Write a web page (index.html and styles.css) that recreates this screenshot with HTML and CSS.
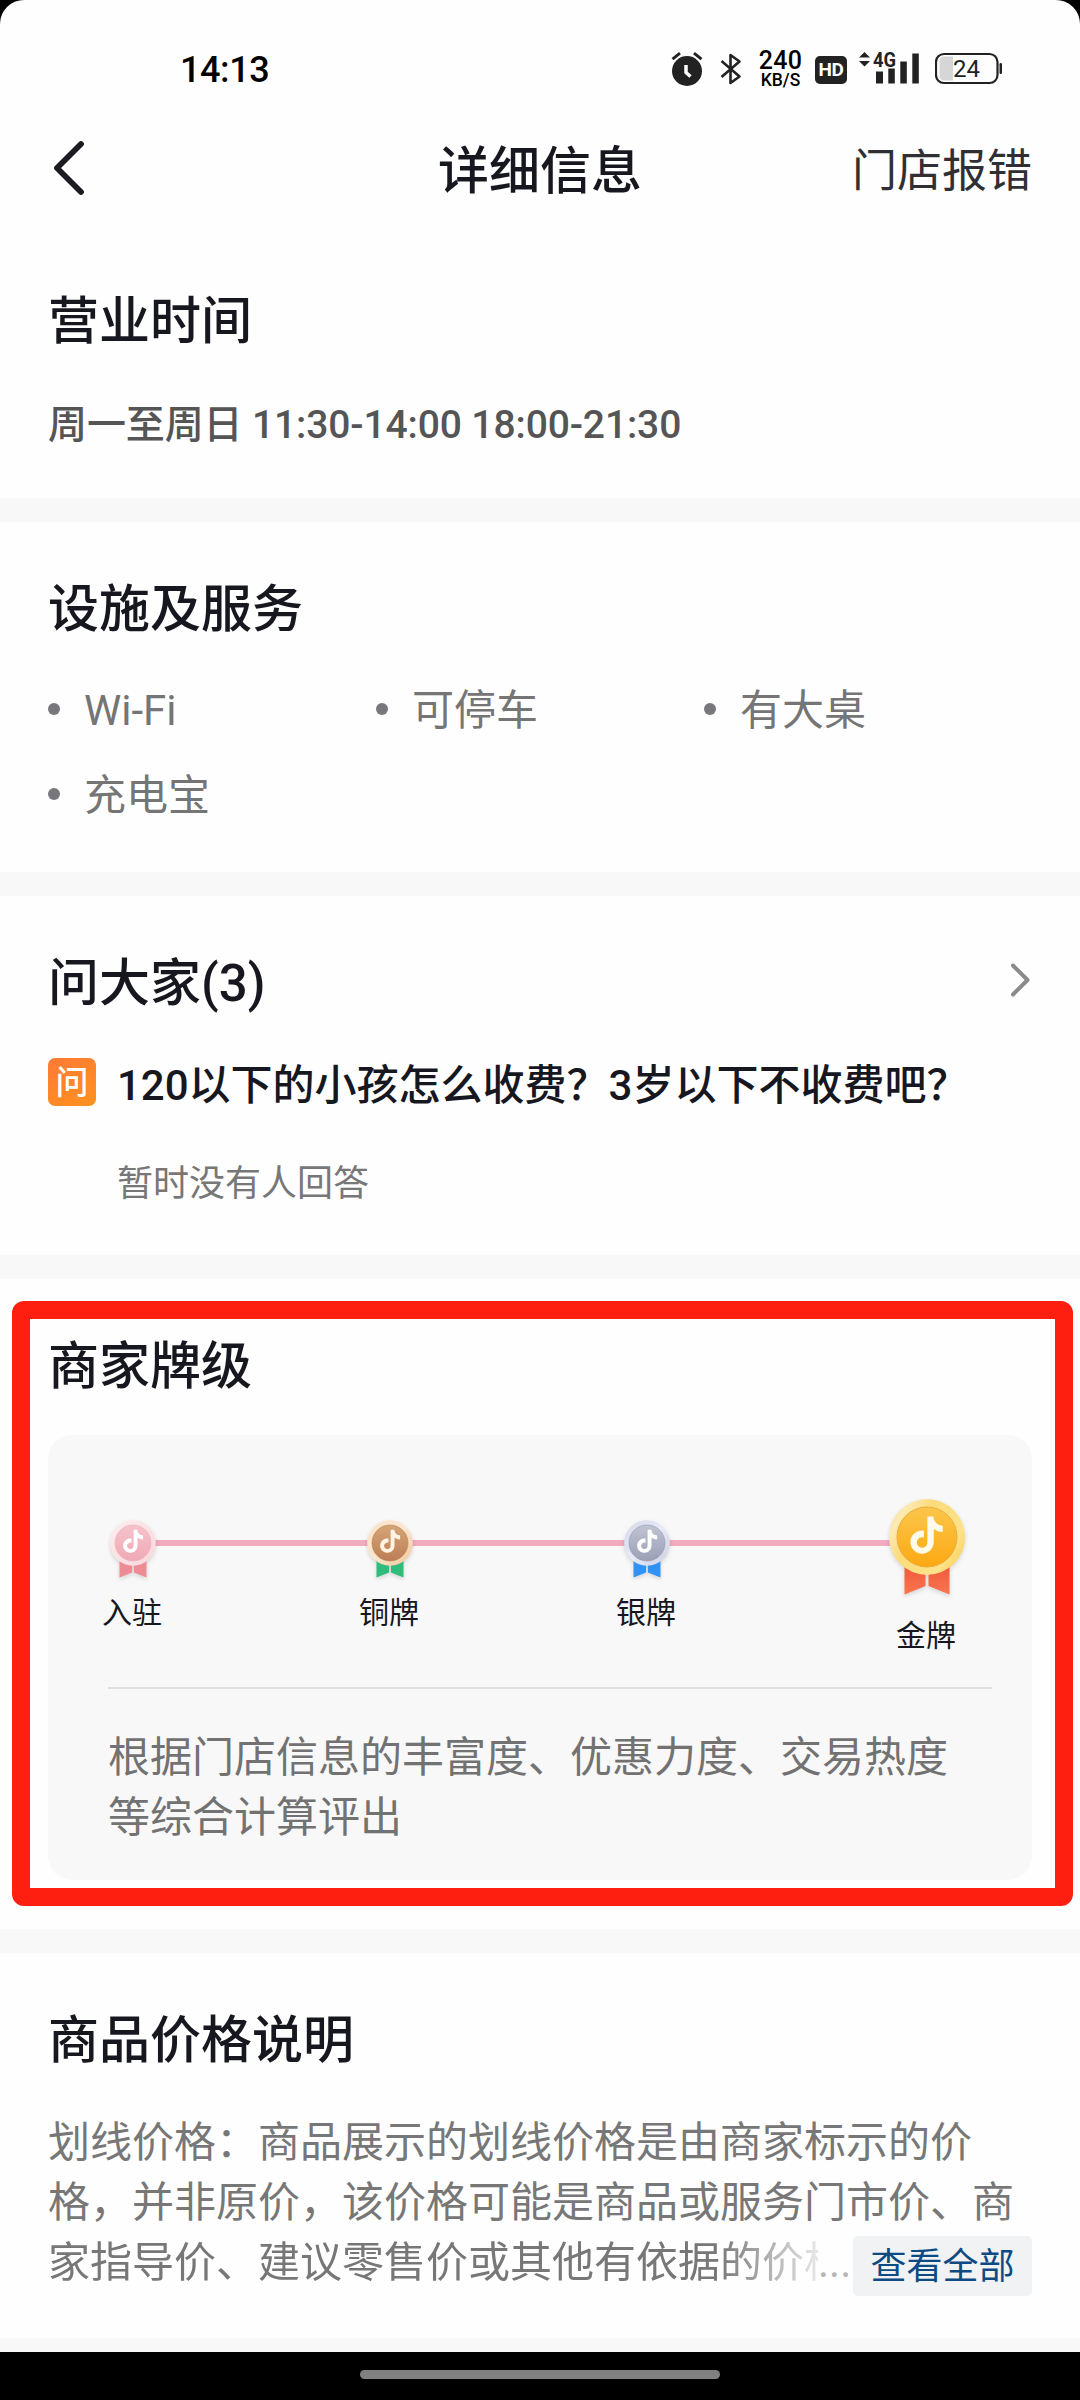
FILE: index.html
```html
<!DOCTYPE html>
<html lang="zh-CN">
<head>
<meta charset="utf-8">
<title>详细信息</title>
<link rel="stylesheet" href="styles.css">
</head>
<body>
<svg class="defs" width="0" height="0" aria-hidden="true">
  <defs>
    <path id="note" d="M12.525.02c1.31-.02 2.61-.01 3.91-.02.08 1.53.63 3.09 1.75 4.17 1.12 1.11 2.7 1.62 4.24 1.79v4.03c-1.44-.05-2.89-.35-4.2-.97-.57-.26-1.1-.59-1.62-.93-.01 2.92.01 5.84-.02 8.75-.08 1.4-.54 2.79-1.35 3.94-1.31 1.92-3.58 3.17-5.91 3.21-1.43.08-2.86-.31-4.08-1.03-2.02-1.19-3.44-3.37-3.65-5.71-.02-.5-.03-1-.01-1.49.18-1.9 1.12-3.72 2.58-4.96 1.66-1.44 3.98-2.13 6.15-1.72.02 1.48-.04 2.96-.04 4.44-.99-.32-2.15-.23-3.02.37-.63.41-1.11 1.04-1.36 1.75-.21.51-.15 1.07-.14 1.61.24 1.64 1.82 3.02 3.5 2.87 1.12-.01 2.19-.66 2.77-1.61.19-.33.4-.67.41-1.06.1-1.79.06-3.57.07-5.36.01-4.03-.01-8.05.02-12.07z"/>
    <path id="ribbon" d="M17.500 62H38.500V89L17.500 97.500zM41.500 62H62.500V97.500L41.500 89z"/>
    <linearGradient id="pinkRim" x1="0" y1="0" x2="1" y2="1"><stop offset="0" stop-color="#fdeeee"/><stop offset="1" stop-color="#fad6db"/></linearGradient>
    <linearGradient id="pinkFace" x1="0" y1="0" x2="0" y2="1"><stop offset="0" stop-color="#f5c3cc"/><stop offset="1" stop-color="#f0a9b5"/></linearGradient>
    <linearGradient id="bronzeRim" x1="0" y1="0" x2="1" y2="1"><stop offset="0" stop-color="#fce3c4"/><stop offset=".5" stop-color="#fbe6cf"/><stop offset="1" stop-color="#f3c493"/></linearGradient>
    <linearGradient id="bronzeFace" x1="0" y1="0" x2="0" y2="1"><stop offset="0" stop-color="#d5a677"/><stop offset="1" stop-color="#bd7d55"/></linearGradient>
    <linearGradient id="silverRim" x1="0" y1="0" x2="1" y2="1"><stop offset="0" stop-color="#d3d7ea"/><stop offset=".5" stop-color="#e7eaf7"/><stop offset="1" stop-color="#cbcfe2"/></linearGradient>
    <linearGradient id="silverFace" x1="0" y1="0" x2="0" y2="1"><stop offset="0" stop-color="#bfc3d2"/><stop offset="1" stop-color="#9ba0b6"/></linearGradient>
    <linearGradient id="goldRim" x1="0" y1=".2" x2="1" y2=".8"><stop offset="0" stop-color="#fbdc83"/><stop offset=".12" stop-color="#fdeab4"/><stop offset=".35" stop-color="#fbdb7b"/><stop offset=".8" stop-color="#fde28a"/><stop offset="1" stop-color="#fcd14f"/></linearGradient>
    <linearGradient id="goldFace" x1="0" y1="0" x2="0" y2="1"><stop offset="0" stop-color="#fcc64a"/><stop offset="1" stop-color="#fca813"/></linearGradient>
    <linearGradient id="goldRibbon" x1="0" y1="0" x2="0" y2="1"><stop offset="0" stop-color="#ee5136"/><stop offset="1" stop-color="#fa7650"/></linearGradient>
  </defs>
</svg>

<div class="screen">
  <header class="status">
    <span class="clock">14:13</span>
    <div class="indicators">
      <svg class="alarm" width="32" height="36" viewBox="0 0 32 36">
        <circle cx="16" cy="20" r="15" fill="#222"/>
        <path d="M1.500 8.200L9 2.200M30.500 8.200L23 2.200" stroke="#222" stroke-width="3" fill="none"/>
        <path d="M15 14v7.500l4.500 4" stroke="#fff" stroke-width="3.500" fill="none"/>
      </svg>
      <svg class="bluetooth" width="22" height="34" viewBox="0 0 22 34">
        <path d="M1.500 9L19.500 24.500L10.500 31V3L19.500 9.500L1.500 25" stroke="#222" stroke-width="2.600" fill="none" stroke-linejoin="round"/>
      </svg>
      <div class="speed"><b>240</b><span>KB/S</span></div>
      <span class="hd">HD</span>
      <svg class="signal" width="62" height="34" viewBox="0 0 62 34">
        <path d="M0 6.500L5.500 1L11 6.500zM0 10L5.500 15.500L11 10z" fill="#222"/>
        <text class="net" x="14" y="15.500" textLength="23" lengthAdjust="spacingAndGlyphs">4G</text>
        <path d="M17 20.500h7v12h-7zM29.300 17.500h6.500v15h-6.500zM41.300 10.500h6.500v22h-6.500zM53.300 2.500h6.500v30h-6.500z" fill="#222"/>
      </svg>
      <svg class="battery" width="68" height="34" viewBox="0 0 68 34">
        <path d="M9 4.500H18V28.500H9a4.500 4.500 0 0 1-4.500-4.500V9A4.500 4.500 0 0 1 9 4.500z" fill="#d6d6d6"/>
        <rect x="1" y="2" width="61.500" height="29" rx="8" fill="none" stroke="#222" stroke-width="2.200"/>
        <rect x="64.500" y="11" width="2.500" height="11" rx="1.200" fill="#222"/>
        <text class="level" x="31.500" y="25">24</text>
      </svg>
    </div>
  </header>

  <nav class="nav">
    <svg class="back" width="34" height="58" viewBox="0 0 34 58"><path d="M29 5L5 29L29 53" fill="none" stroke="#1c1b22" stroke-width="5.800" stroke-linecap="round" stroke-linejoin="round"/></svg>
    <h1>详细信息</h1>
    <a class="report">门店报错</a>
  </nav>

  <main>
    <section class="hours">
      <h2>营业时间</h2>
      <p>周一至周日 11:30-14:00 18:00-21:30</p>
    </section>

    <section class="facilities">
      <h2>设施及服务</h2>
      <ul>
        <li>Wi-Fi</li>
        <li>可停车</li>
        <li>有大桌</li>
        <li>充电宝</li>
      </ul>
    </section>

    <section class="questions">
      <div class="head">
        <h2>问大家(3)</h2>
        <svg width="24" height="36" viewBox="0 0 24 36"><path d="M4 3.500L18.500 18L4 32.500" fill="none" stroke="#8a8a8a" stroke-width="4" stroke-linecap="round" stroke-linejoin="round"/></svg>
      </div>
      <div class="question">
        <span class="tag">问</span>
        <span class="ask">120以下的小孩怎么收费？3岁以下不收费吧？</span>
      </div>
      <p class="answer">暂时没有人回答</p>
    </section>

    <section class="level-section">
      <h2>商家牌级</h2>
      <div class="card">
        <div class="track">
          <div class="step">
            <svg viewBox="0 0 80 100"><use href="#ribbon" fill="#ee8c96"/><circle cx="40" cy="40" r="38" fill="url(#pinkRim)"/><circle cx="40" cy="40" r="30" fill="url(#pinkFace)" stroke="#edafb8"/><use href="#note" fill="#fff" transform="translate(21 18) scale(1.6)"/></svg>
            <span>入驻</span>
          </div>
          <i class="link"></i>
          <div class="step">
            <svg viewBox="0 0 80 100"><use href="#ribbon" fill="#2fbd7b"/><circle cx="40" cy="40" r="38" fill="url(#bronzeRim)"/><circle cx="40" cy="40" r="30" fill="url(#bronzeFace)" stroke="#b9835a"/><use href="#note" fill="#fff3e4" transform="translate(21 18) scale(1.6)"/></svg>
            <span>铜牌</span>
          </div>
          <i class="link"></i>
          <div class="step">
            <svg viewBox="0 0 80 100"><use href="#ribbon" fill="#3292f4"/><circle cx="40" cy="40" r="38" fill="url(#silverRim)"/><circle cx="40" cy="40" r="30" fill="url(#silverFace)" stroke="#9297ab"/><use href="#note" fill="#fff" transform="translate(21 18) scale(1.6)"/></svg>
            <span>银牌</span>
          </div>
          <i class="link"></i>
          <div class="step current">
            <svg viewBox="0 0 80 100"><use href="#ribbon" fill="url(#goldRibbon)"/><circle cx="40" cy="40" r="38" fill="url(#goldRim)"/><circle cx="40" cy="40" r="30" fill="url(#goldFace)" stroke="#e9ae3c"/><use href="#note" fill="#fffaea" transform="translate(21 19.500) scale(1.550)"/></svg>
            <span>金牌</span>
          </div>
        </div>
        <p>根据门店信息的丰富度、优惠力度、交易热度<br>等综合计算评出</p>
      </div>
      <div class="highlight"></div>
    </section>

    <section class="pricing">
      <h2>商品价格说明</h2>
      <div class="terms">
        <p>划线价格：商品展示的划线价格是由商家标示的价<br>格，并非原价，该价格可能是商品或服务门市价、商</p>
        <div class="last">
          <p class="cut">家指导价、建议零售价或其他有依据的价格</p>
          <span class="dots">...</span>
          <a>查看全部</a>
        </div>
      </div>
    </section>
  </main>

  <footer class="gesture"><span></span></footer>
</div>
</body>
</html>
```

FILE: styles.css
```css
* { box-sizing: border-box; }
html, body { margin: 0; padding: 0; background: #000; }
body { font-family: Roboto, "Noto Sans CJK SC", sans-serif; color: #17171f; }
h1, h2, p, ul { margin: 0; padding: 0; font-weight: 400; }
svg { display: block; flex: none; }
.defs { position: absolute; }

.screen {
  width: 1080px;
  height: 2400px;
  overflow: hidden;
  display: flex;
  flex-direction: column;
  background: #fefefe;
  border-radius: 24px 24px 0 0;
}

/* Status bar */
.status {
  height: 120px;
  padding: 50px 77px 0 180px;
  display: flex;
  justify-content: space-between;
  align-items: flex-start;
}
.clock { font-size: 36px; font-weight: 500; line-height: 41px; letter-spacing: -.4px; color: #000; }
.indicators { display: flex; align-items: flex-start; height: 40px; }
.alarm { margin: 1px 17px 0 0; }
.bluetooth { margin: 2px 17px 0 0; }
.speed {
  width: 43px;
  margin-right: 13px;
  display: flex;
  flex-direction: column;
  align-items: center;
  color: #000;
}
.speed b { font-size: 25px; font-weight: 500; line-height: 22px; letter-spacing: .3px; }
.speed span { font-size: 17.500px; font-weight: 500; line-height: 17px; }
.hd {
  width: 32px;
  height: 28px;
  margin: 6px 12px 0 0;
  border-radius: 5px;
  background: #222;
  color: #fff;
  font: 700 19px/28px Roboto, sans-serif;
  text-align: center;
  letter-spacing: -.5px;
}
.signal { margin: 1px 14px 0 0; overflow: visible; }
.battery { margin-top: 2px; }
.net { font: 700 20px Roboto, sans-serif; fill: #222; }
.level { font: 400 24px Roboto, sans-serif; fill: #222; text-anchor: middle; }

/* Title bar */
.nav {
  height: 100px;
  padding: 0 48px 0 50px;
  display: grid;
  grid-template-columns: 1fr auto 1fr;
  align-items: center;
}
.back { margin: -4px 0 0 2px; }
.nav h1 { font-size: 51px; font-weight: 500; line-height: 60px; margin: 4px 2px 0 0; }
.report { font-size: 45px; line-height: 60px; margin-top: 4px; text-align: right; color: #303034; }

/* Sections */
section { position: relative; padding: 58px 48px 0; border-bottom: 24px solid #f8f8f8; }
h2 { font-size: 51px; font-weight: 500; line-height: 60px; }

.hours { height: 302px; padding-top: 72px; }
.hours p { margin-top: 48px; font-size: 39px; font-weight: 500; line-height: 50px; letter-spacing: -.12px; color: #555; }

.facilities { height: 374px; }
.facilities ul {
  display: grid;
  grid-template-columns: repeat(3, 328px);
  row-gap: 25px;
  margin-top: 41px;
  list-style: none;
}
.facilities li {
  display: flex;
  align-items: center;
  gap: 24px;
  font-size: 42px;
  line-height: 60px;
  color: #757575;
}
.facilities li::before { content: ""; width: 12px; height: 12px; margin-top: -4px; border-radius: 50%; background: #77777c; }

.questions { height: 383px; }
.head { display: flex; justify-content: space-between; align-items: center; }
.head svg { margin: -8px -1px 0 0; }
.question { display: flex; margin-top: 42px; gap: 21px; }
.tag {
  width: 48px;
  height: 48px;
  margin-top: 2px;
  border-radius: 7px;
  background: linear-gradient(150deg, #ff7a35, #ff921f);
  color: #fff;
  font-size: 33px;
  font-weight: 500;
  line-height: 50px;
  text-align: center;
}
.ask { font-size: 42px; font-weight: 500; line-height: 60px; }
.answer { margin: 43px 0 0 69px; font-size: 36px; line-height: 50px; color: #777; }

.level-section { height: 674px; }
.card { height: 445px; margin-top: 38px; padding: 62px 40px 0 45px; border-radius: 24px; background: #f8f8f8; }
.track { height: 190px; display: grid; grid-template-columns: 80px 177px 80px 177px 80px 200px 80px; align-items: start; }
.link { height: 6px; margin: 43px -20px 0; background: #f2abbe; }
.step { position: relative; display: flex; flex-direction: column; align-items: center; padding-top: 22px; }
.step svg { width: 48px; height: 60px; filter: drop-shadow(0 2px 2px rgba(0, 0, 0, .14)); }
.step span { margin: 14px 2px 0 0; font-size: 30px; line-height: 40px; }
.step.current { padding-top: 0; }
.step.current svg { width: 80px; height: 100px; }
.step.current span { margin-top: 19px; }
.card p {
  margin-left: 15px;
  padding-top: 39px;
  border-top: 2px solid #e0e0e0;
  font-size: 42px;
  line-height: 60px;
  color: #727272;
}
.highlight {
  position: absolute;
  left: 12px;
  top: 22px;
  width: 1061px;
  height: 605px;
  border: 18px solid #ff1f11;
  border-radius: 12px;
}

.pricing { height: 399px; border-bottom-width: 14px; }
.terms { margin-top: 42px; }
.terms p { font-size: 42px; line-height: 60px; color: #777; }
.last { display: flex; align-items: flex-start; }
.cut {
  width: 770px;
  flex: none;
  white-space: nowrap;
  overflow: hidden;
  -webkit-mask-image: linear-gradient(90deg, #000 670px, transparent 790px);
  mask-image: linear-gradient(90deg, #000 670px, transparent 790px);
}
.dots { width: 35px; font-size: 42px; line-height: 60px; color: #b5b5b5; }
.last a {
  width: 179px;
  height: 60px;
  margin-top: 3px;
  border-radius: 5px;
  background: #f1f2f3;
  color: #0e4a84;
  font-size: 36px;
  line-height: 63px;
  text-align: center;
}

.gesture { height: 48px; background: #000; display: flex; justify-content: center; padding-top: 18px; }
.gesture span { width: 360px; height: 9px; border-radius: 5px; background: #808080; }
```
